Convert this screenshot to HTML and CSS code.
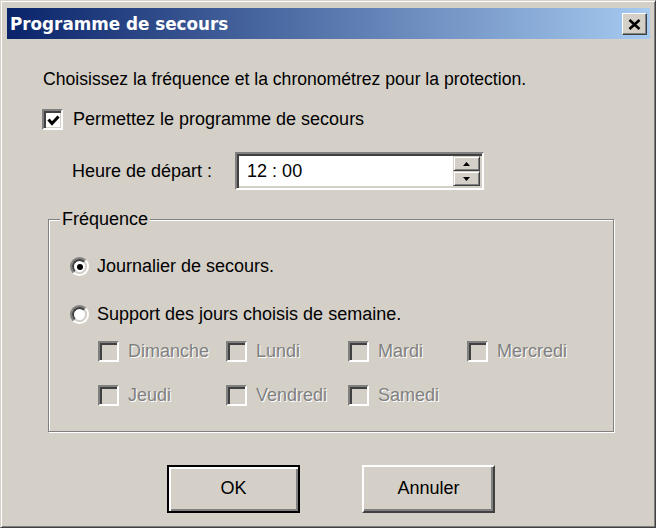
FILE: index.html
```html
<!DOCTYPE html>
<html lang="fr">
<head>
<meta charset="utf-8">
<title>Programme de secours</title>
<link rel="stylesheet" href="styles.css">
</head>
<body>
<div class="window">
  <div class="titlebar">
    <span class="title">Programme de secours</span>
    <button class="close" type="button" aria-label="Fermer">
      <svg width="13" height="11" viewBox="0 0 13 11"><path d="M1.5 1 L11.5 10 M11.5 1 L1.5 10" stroke="#000" stroke-width="2.6" fill="none"/></svg>
    </button>
  </div>
  <div class="content">
    <p class="intro">Choisissez la fréquence et la chronométrez pour la protection.</p>
    <div class="check-row">
      <span class="checkbox">
        <svg width="13" height="13" viewBox="0 0 13 13"><path d="M1.5 5.5 L5 9.5 L11.5 2.5" stroke="#000" stroke-width="3" fill="none"/></svg>
      </span>
      <span>Permettez le programme de secours</span>
    </div>
    <div class="time-row">
      <span>Heure de départ :</span>
      <div class="spinner">
        <div class="spin-value">12 : 00</div>
        <div class="spin-btns">
          <div class="spin-btn"><svg width="7" height="4" viewBox="0 0 7 4"><path d="M0 4 L3.5 0 L7 4 Z" fill="#000"/></svg></div>
          <div class="spin-btn"><svg width="7" height="4" viewBox="0 0 7 4"><path d="M0 0 L7 0 L3.5 4 Z" fill="#000"/></svg></div>
        </div>
      </div>
    </div>
    <fieldset class="group">
      <legend>Fréquence</legend>
      <div class="radio-row first">
        <span class="radio"><span class="radio-inner"><span class="dot"></span></span></span>
        <span>Journalier de secours.</span>
      </div>
      <div class="radio-row">
        <span class="radio"><span class="radio-inner"></span></span>
        <span>Support des jours choisis de semaine.</span>
      </div>
      <div class="days">
        <div class="day"><span class="checkbox disabled"></span><span class="dis-text">Dimanche</span></div>
        <div class="day"><span class="checkbox disabled"></span><span class="dis-text">Lundi</span></div>
        <div class="day"><span class="checkbox disabled"></span><span class="dis-text">Mardi</span></div>
        <div class="day"><span class="checkbox disabled"></span><span class="dis-text">Mercredi</span></div>
        <div class="day"><span class="checkbox disabled"></span><span class="dis-text">Jeudi</span></div>
        <div class="day"><span class="checkbox disabled"></span><span class="dis-text">Vendredi</span></div>
        <div class="day"><span class="checkbox disabled"></span><span class="dis-text">Samedi</span></div>
      </div>
    </fieldset>
    <div class="buttons">
      <button class="btn default" type="button">OK</button>
      <button class="btn" type="button">Annuler</button>
    </div>
  </div>
</div>
</body>
</html>
```
FILE: styles.css
```css
html, body {
  margin: 0;
  padding: 0;
  background: #ffffff;
}

body {
  font-family: "Liberation Sans", Arial, sans-serif;
  font-size: 18px;
  color: #000;
}

.window {
  width: 656px;
  height: 528px;
  box-sizing: border-box;
  background: #d4d0c8;
  border: 1px solid;
  border-color: #d4d0c8 #404040 #404040 #d4d0c8;
  box-shadow: inset 1px 1px 0 #ffffff, inset -1px -1px 0 #808080;
  padding: 7px 5px 5px 6px;
  display: flex;
  flex-direction: column;
}

.titlebar {
  height: 31px;
  flex: none;
  background: linear-gradient(to right, #0a246a, #a6caf0);
  display: flex;
  align-items: center;
  justify-content: space-between;
  padding: 0 3px 0 3px;
}

.title {
  color: #ffffff;
  font-family: "DejaVu Sans", Verdana, sans-serif;
  font-weight: bold;
  font-size: 16.8px;
  padding-top: 1px;
}

.close {
  width: 25px;
  height: 22px;
  padding: 0;
  margin: 1px 0 0 0;
  background: #d4d0c8;
  border: 1px solid;
  border-color: #ffffff #404040 #404040 #ffffff;
  box-shadow: inset -1px -1px 0 #808080;
  display: flex;
  align-items: center;
  justify-content: center;
}

.content {
  flex: 1;
  padding: 30px 0 0 36px;
  display: flex;
  flex-direction: column;
  align-items: flex-start;
  line-height: 21px;
}

.intro {
  margin: 0;
  font-size: 17.6px;
}

.check-row {
  margin-top: 19px;
  margin-left: -1px;
  display: flex;
  align-items: center;
  gap: 10px;
}

.checkbox {
  width: 21px;
  height: 21px;
  box-sizing: border-box;
  flex: none;
  background: #ffffff;
  border: 2px solid;
  border-color: #808080 #ffffff #ffffff #808080;
  box-shadow: inset 2px 2px 0 #404040, inset -1px -1px 0 #d4d0c8;
  display: flex;
  align-items: center;
  justify-content: center;
  padding: 1px 0 0 1px;
}

.checkbox.disabled {
  background: #d4d0c8;
}

.time-row {
  margin-top: 22px;
  margin-left: 29px;
  display: flex;
  align-items: center;
  gap: 23px;
}

.spinner {
  width: 249px;
  height: 38px;
  box-sizing: border-box;
  background: #ffffff;
  border: 2px solid;
  border-color: #808080 #ffffff #ffffff #808080;
  box-shadow: inset 2px 2px 0 #404040, inset -2px -2px 0 #d4d0c8;
  padding: 2px;
  display: flex;
  align-items: stretch;
}

.spin-value {
  flex: 1;
  padding-left: 8px;
  display: flex;
  align-items: center;
  padding-top: 1px;
}

.spin-btns {
  width: 27px;
  display: flex;
  flex-direction: column;
}

.spin-btn {
  flex: 1;
  box-sizing: border-box;
  background: #d4d0c8;
  border: 1px solid;
  border-color: #d4d0c8 #404040 #404040 #d4d0c8;
  box-shadow: inset 1px 1px 0 #ffffff, inset -1px -1px 0 #808080;
  display: flex;
  align-items: center;
  justify-content: center;
}

.group {
  margin: 19px 0 0 5px;
  width: 566px;
  box-sizing: border-box;
  border: 1px solid #808080;
  box-shadow: inset 1px 1px 0 #ffffff, 1px 1px 0 #ffffff;
  padding: 0 0 25px 21px;
  min-width: 0;
}

.group legend {
  margin-left: -10px;
  padding: 0 2px;
  background: #d4d0c8;
  line-height: 21px;
}

.radio-row {
  display: flex;
  align-items: center;
  gap: 8px;
  height: 21px;
  margin-top: 27px;
}

.radio-row.first {
  margin-top: 26px;
}

.radio {
  width: 19px;
  height: 19px;
  box-sizing: border-box;
  border-radius: 50%;
  border: 2px solid;
  border-color: #808080 #ffffff #ffffff #808080;
  flex: none;
  display: flex;
}

.radio-inner {
  flex: 1;
  border-radius: 50%;
  border: 2px solid;
  border-color: #404040 #d4d0c8 #d4d0c8 #404040;
  background: #ffffff;
  display: flex;
  align-items: center;
  justify-content: center;
}

.dot {
  width: 6px;
  height: 6px;
  border-radius: 50%;
  background: #000;
}

.days {
  margin: 16px 0 0 28px;
  display: grid;
  grid-template-columns: 128px 122px 119px auto;
  row-gap: 22.5px;
}

.day {
  display: flex;
  align-items: center;
  gap: 9px;
  height: 21px;
}

.dis-text {
  color: #808080;
  text-shadow: 1px 1px 0 #ffffff;
}

.buttons {
  margin: 33px 0 0 124px;
  display: flex;
  gap: 62px;
}

.btn {
  width: 133px;
  height: 48px;
  box-sizing: border-box;
  background: #d4d0c8;
  font-family: "Liberation Sans", Arial, sans-serif;
  font-size: 18px;
  color: #000;
  border: 2px solid;
  border-color: #ffffff #404040 #404040 #ffffff;
  box-shadow: inset -2px -2px 0 #808080;
  padding: 0;
}

.btn.default {
  border: 2px solid #000000;
  box-shadow: inset 2px 2px 0 #ffffff, inset -2px -2px 0 #808080;
}
```
